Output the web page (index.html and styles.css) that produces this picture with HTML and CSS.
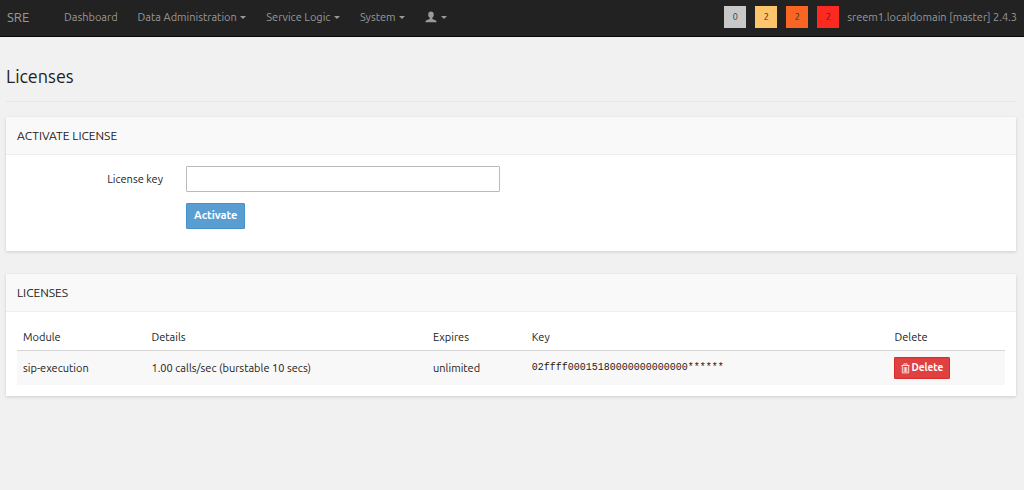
FILE: index.html
```html
<!DOCTYPE html>
<html lang="en">
<head>
<meta charset="utf-8">
<title>SRE - Licenses</title>
<link rel="stylesheet" href="styles.css">
</head>
<body>
<header class="navbar">
  <a class="brand" href="#">SRE</a>
  <nav class="menu">
    <a href="#">Dashboard</a>
    <a href="#">Data Administration <span class="caret"></span></a>
    <a href="#">Service Logic <span class="caret"></span></a>
    <a href="#">System <span class="caret"></span></a>
    <a href="#" aria-label="User"><svg class="user" viewBox="0 0 12 12"><path d="M6 .5C4.300.5 3.200 1.600 3.200 3.400c0 1.500.6 2.700 1.500 3.400v1C4.500 8.500 1 9 .6 10.200L.4 11.300h11.200l-.2-1.100C11 9 7.500 8.500 7.300 7.800v-1c.9-.7 1.500-1.900 1.500-3.400C8.800 1.600 7.700.5 6 .5z"/></svg> <span class="caret"></span></a>
  </nav>
  <div class="alarms">
    <a class="alarm none" href="#">0</a>
    <a class="alarm minor" href="#">2</a>
    <a class="alarm major" href="#">2</a>
    <a class="alarm critical" href="#">2</a>
  </div>
  <span class="host">sreem1.localdomain [master] 2.4.3</span>
</header>
<main class="page">
  <h1>Licenses</h1>
  <section class="panel">
    <h2>ACTIVATE LICENSE</h2>
    <form class="form">
      <label for="key">License key</label>
      <input id="key" type="text">
      <button class="btn primary" type="button">Activate</button>
    </form>
  </section>
  <section class="panel">
    <h2>LICENSES</h2>
    <div class="body">
      <table>
        <colgroup><col class="c-module"><col class="c-details"><col class="c-expires"><col class="c-key"><col class="c-delete"></colgroup>
        <thead><tr><th>Module</th><th>Details</th><th>Expires</th><th>Key</th><th>Delete</th></tr></thead>
        <tbody><tr>
          <td>sip-execution</td><td>1.00 calls/sec (burstable 10 secs)</td><td>unlimited</td>
          <td class="mono">02ffff00015180000000000000******</td>
          <td><button class="btn danger" type="button"><svg class="trash" viewBox="0 0 9 11"><path d="M.3 2.500h8.400M2.800 2.300V.9h3.400v1.400M1.300 2.700v7.200h6.400V2.700M3.200 4v5M4.500 4v5M5.800 4v5"/></svg>Delete</button></td>
        </tr></tbody>
      </table>
    </div>
  </section>
</main>
</body>
</html>
```
FILE: styles.css
```css
* { box-sizing: border-box; }
body {
  margin: 0;
  background: #f1f1f1;
  color: #222;
  font: 11px/16px Ubuntu, "Noto Sans", sans-serif;
}
a { color: inherit; text-decoration: none; }
.navbar {
  display: flex;
  align-items: center;
  height: 37px;
  padding: 0 7px 3px;
  background: #222;
  border-bottom: 1px solid #080808;
  color: #999;
}
.brand { width: 57px; font-size: 13px; }
.menu { display: flex; gap: 20px; }
.caret {
  display: inline-block;
  margin-left: 1px;
  vertical-align: middle;
  border: 3px solid transparent;
  border-top-color: currentColor;
  border-bottom: 0;
}
.user { width: 12px; height: 12px; vertical-align: -2px; fill: currentColor; }
.alarms { display: flex; gap: 9px; margin-left: auto; }
.alarm {
  width: 22px;
  line-height: 22px;
  color: #333;
  font-size: 9px;
  text-align: center;
}
.none { background: #c8c8c8; }
.minor { background: #fdc56b; }
.major { background: #fb6524; }
.critical { background: #fb291f; }
.host { margin-left: 8px; }
.page { padding: 27px 8px 0 6px; }
h1 {
  margin: 0 0 15px;
  padding-bottom: 13px;
  border-bottom: 1px solid #e7e7e7;
  font-size: 18px;
  font-weight: 400;
  line-height: 24px;
}
.panel {
  margin-bottom: 23px;
  background: #fff;
  box-shadow: 0 1px 3px rgba(0, 0, 0, .15);
}
h2 {
  margin: 0;
  padding: 11px 11px 10px;
  background: #f9f9f9;
  border-bottom: 1px solid #eee;
  font-size: 12px;
  font-weight: 400;
  line-height: 16px;
}
.form {
  display: grid;
  grid-template-columns: 146px minmax(0, 314px);
  gap: 11px 23px;
  align-items: center;
  padding: 11px 11px 22px;
}
.form label { text-align: right; }
.form input {
  height: 26px;
  padding: 4px 8px;
  border: 1px solid #bbb;
  border-radius: 1px;
  font: inherit;
}
.btn {
  border: 1px solid;
  border-radius: 1px;
  color: #fff;
  font: inherit;
  font-weight: 600;
}
.primary {
  grid-column: 2;
  justify-self: start;
  height: 26px;
  padding: 0 7px 2px;
  background: #5a9ed1;
  border-color: #4593cc;
}
.body { padding: 11px; }
table { width: 100%; table-layout: fixed; border-collapse: collapse; }
.c-module { width: 13%; }
.c-details { width: 28.500%; }
.c-expires { width: 10%; }
.c-key { width: 36.700%; }
th, td { padding: 6px; text-align: left; font-weight: 400; }
th { padding-bottom: 5px; border-bottom: 1px solid #d6d6d6; }
td { background: #f8f8f8; }
.mono { font: 10px/16px "Liberation Mono", monospace; }
.danger {
  display: flex;
  align-items: center;
  gap: 1px;
  height: 22px;
  padding: 0 6px;
  background: #e04040;
  border-color: #d92b2b;
  font-size: 10px;
}
.trash { width: 9px; height: 11px; fill: none; stroke: currentColor; stroke-width: .8; }
```
